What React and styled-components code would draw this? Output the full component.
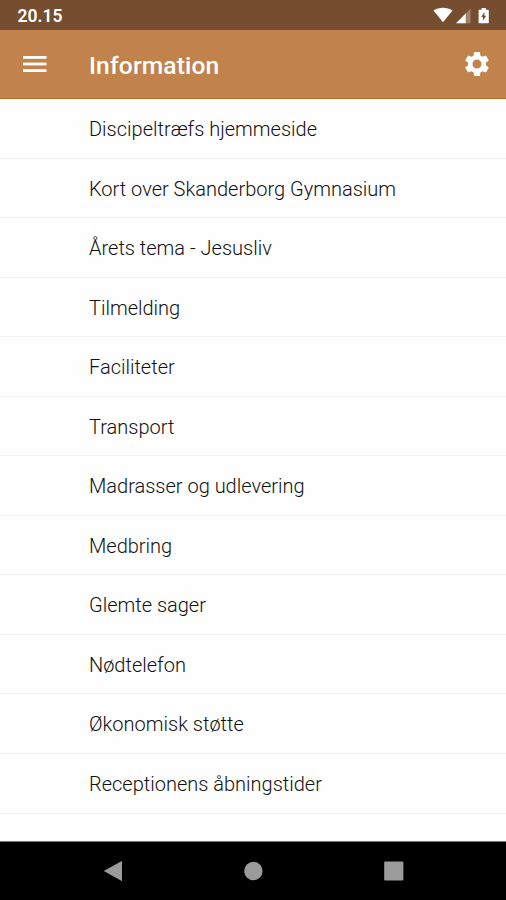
import React from "react";
import styled, { createGlobalStyle } from "styled-components";
import { MdSettings } from "react-icons/md";

const infoList = [
  "Discipeltræfs hjemmeside",
  "Kort over Skanderborg Gymnasium",
  "Årets tema - Jesusliv",
  "Tilmelding",
  "Faciliteter",
  "Transport",
  "Madrasser og udlevering",
  "Medbring",
  "Glemte sager",
  "Nødtelefon",
  "Økonomisk støtte",
  "Receptionens åbningstider",
];

const App = () => {
  return (
    <>
      <GlobalStyle />
      <StScreen>
        <StStatusBar>
          <StTime>20.15</StTime>
          {/* wifi, signal, battery */}
          <svg width="57" height="18" viewBox="0 0 57 18" fill="#fff">
            <path d="M0.5 4.4C6 0.8 14 0.8 19.5 4.4L10 16.3z" />
            <path d="M37.5 2.8V17.2H23z" opacity="0.3" />
            <path d="M32.7 7.6V17.2H23z" />
            <path d="M46.3 3.7h2.3V1.9h4.2v1.8h2.3q.7 0 .7.7v12.2q0 .7-.7.7h-8.8q-.7 0-.7-.7v-12.2q0-.7.7-.7z" />
            <path d="M51.4 6L48.3 11H50.1V14.8L53.1 9.8H51.3z" fill="#6b4a32" />
          </svg>
        </StStatusBar>
        <StAppBar>
          <StIconBtn type="button" aria-label="Menu">
            <svg width="24" height="18" viewBox="0 0 24 18" fill="#fff">
              <rect y="1" width="23.5" height="2.8" />
              <rect y="7.6" width="23.5" height="2.8" />
              <rect y="14.2" width="23.5" height="2.8" />
            </svg>
          </StIconBtn>
          <StTitle>Information</StTitle>
          <StIconBtn type="button" aria-label="Settings">
            <MdSettings size={30} />
          </StIconBtn>
        </StAppBar>
        <StList>
          {infoList.map((item) => (
            <StItem key={item}>{item}</StItem>
          ))}
        </StList>
        <StNavBar>
          <svg width="20" height="22" viewBox="0 0 20 22" fill="#9b9b9b">
            <path d="M0.8 11L18.3 1.2Q19 .8 19 1.6V20.4Q19 21.2 18.3 20.8z" />
          </svg>
          <svg width="20" height="20" viewBox="0 0 20 20" fill="#9b9b9b">
            <circle cx="10.4" cy="10" r="9.2" />
          </svg>
          <svg width="20" height="20" viewBox="0 0 20 20" fill="#9b9b9b">
            <rect x="0.2" y="0.4" width="19.2" height="19.2" rx="1" />
          </svg>
        </StNavBar>
      </StScreen>
    </>
  );
};

// styled components
const GlobalStyle = createGlobalStyle`
  * {
    box-sizing: border-box;
  }
  body {
    margin: 0;
    font-family: Roboto, "Liberation Sans", sans-serif;
  }
`;

const StScreen = styled.div`
  width: 506px;
  height: 900px;
  display: flex;
  flex-direction: column;
  overflow: hidden;
  background-color: #fefefe;
`;

const StStatusBar = styled.div`
  height: 30px;
  flex-shrink: 0;
  display: flex;
  align-items: center;
  justify-content: space-between;
  padding: 0 16px 0 17.5px;
  background-color: #764e2f;
`;

const StTime = styled.span`
  color: #fff;
  font-size: 17.5px;
  font-weight: 600;
  line-height: 30px;
  padding-top: 2px;
`;

const StAppBar = styled.header`
  height: 69px;
  flex-shrink: 0;
  display: flex;
  align-items: center;
  padding: 0 14px 0 23px;
  color: #fff;
  background-color: #c1834b;
  border-bottom: 1px solid #b3701f;
`;

const StIconBtn = styled.button`
  display: flex;
  padding: 0;
  border: 0;
  color: inherit;
  background: none;
`;

const StTitle = styled.h1`
  flex: 1;
  margin: 0;
  padding: 3px 0 0 42px;
  font-size: 24.6px;
  font-weight: 500;
  letter-spacing: 0.15px;
`;

const StList = styled.ul`
  flex: 1;
  margin: 0;
  padding: 0;
  list-style: none;
`;

const StItem = styled.li`
  height: 59.55px;
  padding-left: 89px;
  border-bottom: 1px solid #f3f3f3;
  color: #111;
  font-size: 20px;
  font-weight: 300;
  line-height: 60px;
`;

const StNavBar = styled.nav`
  height: 59px;
  flex-shrink: 0;
  display: flex;
  align-items: center;
  justify-content: space-between;
  padding: 0 102.5px;
  border-top: 1px solid #777;
  background-color: #000;
`;

export default App;
